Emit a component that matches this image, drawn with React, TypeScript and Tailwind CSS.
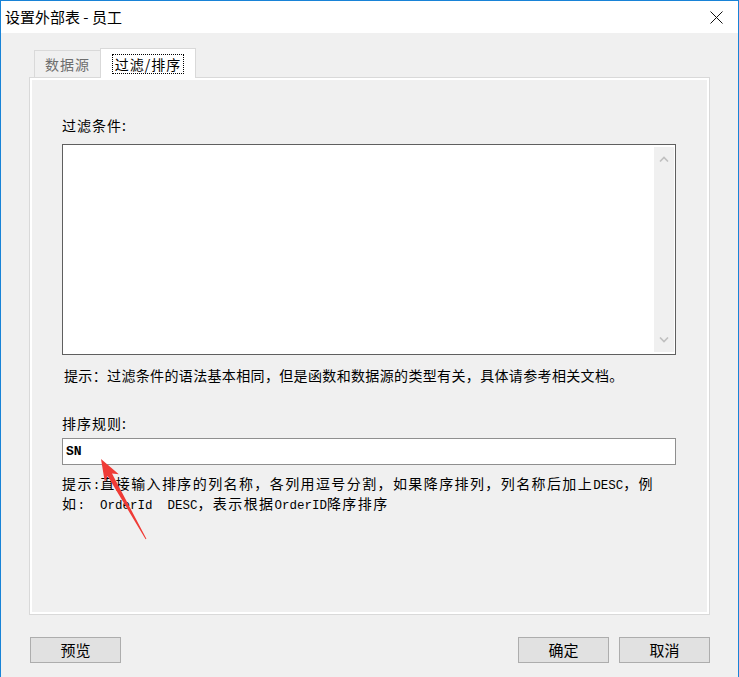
import React from "react";

const cjk = "font-['Noto_Sans_CJK_SC',sans-serif]";
const mono = "font-['Liberation_Mono','Noto_Sans_CJK_SC',monospace]";

function Chevron({ up }: { up?: boolean }) {
    return (
        <svg width="10" height="6" viewBox="0 0 10 6">
            <path d={up ? "M1 5.5 L5 1.5 L9 5.5" : "M1 0.5 L5 4.5 L9 0.5"} fill="none" stroke="#c0c0c0" strokeWidth="1.6" />
        </svg>
    );
}

function Button({ label }: { label: string }) {
    return (
        <div className="flex h-[26px] w-[91px] items-center justify-center border border-[#adadad] bg-[#e1e1e1] text-[15px] leading-[20px] text-black">
            {label}
        </div>
    );
}

export default function App() {
    return (
        <div className={`relative flex h-[677px] w-[739px] flex-col border-x border-t border-[#1883d7] bg-[#f0f0f0] text-black ${cjk}`}>
            {/* title bar */}
            <div className="flex h-[32px] items-center justify-between bg-white pl-[4px] pr-[15px]">
                <span className="text-[15px] leading-[20px]">设置外部表 - 员工</span>
                <svg width="13" height="13" viewBox="0 0 13 13">
                    <path d="M0.5 0.5 L12.5 12.5 M12.5 0.5 L0.5 12.5" stroke="#111" strokeWidth="1" />
                </svg>
            </div>

            <div className="flex flex-col pl-[28px] pt-[15px]">
                {/* tabs */}
                <div className="flex h-[29px] items-end pl-[5px]">
                    <div className="flex h-[27px] w-[66px] items-center justify-center border-l border-t border-[#d9d9d9] bg-[#f0f0f0] text-[14px] tracking-[1px] text-[#6d6d6d]">
                        数据源
                    </div>
                    <div className="relative z-10 -mb-[1px] flex h-[30px] w-[96px] items-center justify-center border-x border-t border-[#d9d9d9] bg-white">
                        <span className="border border-dotted border-black px-[2px] text-[14px] leading-[18px] tracking-[1px]">过滤/排序</span>
                    </div>
                </div>

                {/* panel */}
                <div className="h-[538px] w-[681px] border border-[#d9d9d9] bg-white p-[2px]">
                    <div className="flex h-full flex-col bg-[#f0f0f0] pl-[30px] pt-[35px]">
                        <div className="h-[20px] text-[14px] leading-[20px] tracking-[1px]">过滤条件:</div>
                        <div className="mt-[9px] flex h-[211px] w-[614px] border border-[#5f5f5f] bg-white py-[2px] pr-[1px]">
                            <div className="flex-1" />
                            <div className="flex w-[20px] flex-col items-center justify-between bg-[#f0f0f0] py-[9px]">
                                <Chevron up />
                                <Chevron />
                            </div>
                        </div>
                        <div className="mt-[10px] h-[20px] whitespace-nowrap pl-[2px] text-[14px] leading-[20px] tracking-[0.35px]">
                            提示：过滤条件的语法基本相同，但是函数和数据源的类型有关，具体请参考相关文档。
                        </div>
                        <div className="mt-[28px] h-[20px] text-[14px] leading-[20px] tracking-[1px]">排序规则:</div>
                        <div className="mt-[5px] flex h-[27px] w-[614px] items-center border border-[#8f8f8f] bg-white pl-[3px]">
                            <span className={`${mono} text-[13px] font-bold`}>SN</span>
                        </div>
                        <div className="mt-[10px] flex flex-col text-[14px] leading-[17px] tracking-[1.4px]">
                            <div className="whitespace-pre">
                                提示<span className={`${mono} text-[12.5px] tracking-normal`}>:</span>直接输入排序的列名称，各列用逗号分割，如果降序排列，列名称后加上<span className={`${mono} text-[12.5px] tracking-normal`}>DESC</span>，例
                            </div>
                            <div className="whitespace-pre">
                                如<span className={`${mono} text-[12.5px] tracking-normal`}>:  OrderId  DESC</span>，表示根据<span className={`${mono} text-[12.5px] tracking-normal`}>OrderID</span>降序排序
                            </div>
                        </div>
                    </div>
                </div>

                {/* buttons */}
                <div className="mt-[22px] flex w-[681px] items-center pl-[1px]">
                    <Button label="预览" />
                    <div className="flex-1" />
                    <div className="flex gap-[10px]">
                        <Button label="确定" />
                        <Button label="取消" />
                    </div>
                </div>
            </div>

            {/* red annotation arrow */}
            <svg className="pointer-events-none absolute left-0 top-0" width="739" height="677">
                <polygon
                    points="100,458 117.8,473.3 111,472.5 145.4,537.8 144.6,538.2 106.6,474.9 103.8,481.1"
                    fill="#ef3b36"
                />
            </svg>
        </div>
    );
}
